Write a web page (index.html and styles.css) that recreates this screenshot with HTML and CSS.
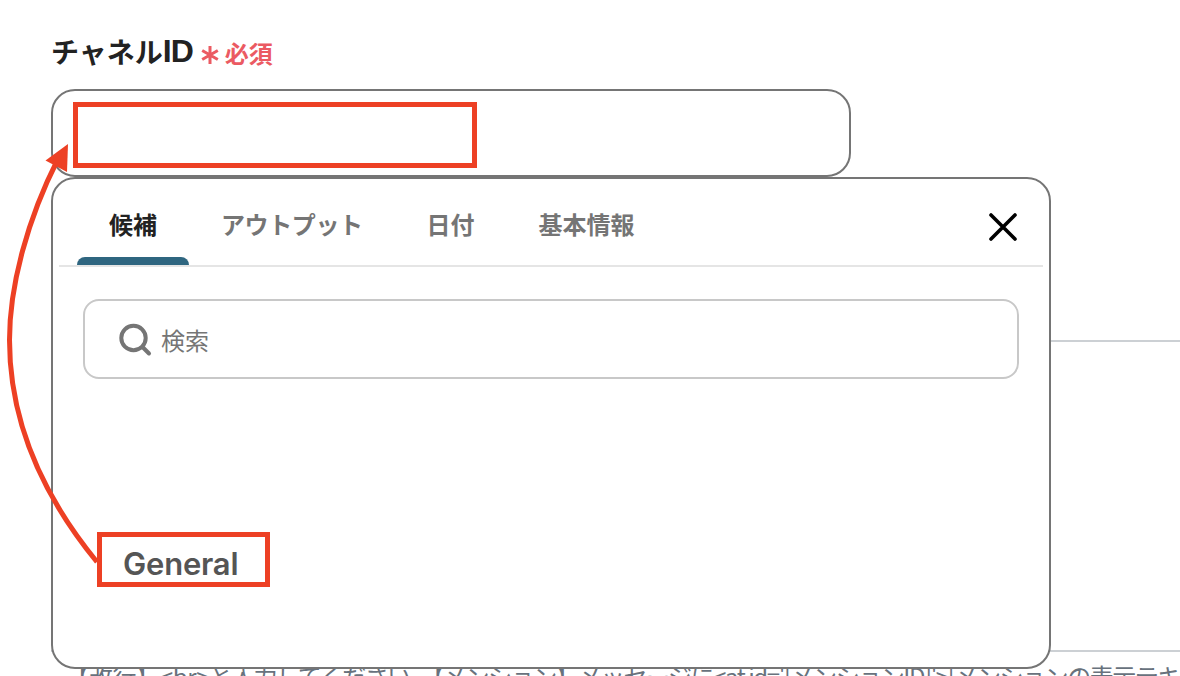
FILE: index.html
```html
<!DOCTYPE html>
<html lang="ja">
<head>
    <meta charset="UTF-8">
    <meta name="viewport" content="width=device-width, initial-scale=1.0">
    <title>チャネルID</title>
    <link rel="stylesheet" href="styles.css">
</head>
<body>
    <div class="page">
        <div class="form-group">
            <label class="label" for="channel"><span class="label-kana">チャネル</span><span class="label-id">ID</span>
                <span class="required">
                    <svg class="asterisk" width="18" height="20" viewBox="0 0 18 20">
                        <path d="M9 1v18M1.2 5.5l15.6 9M16.8 5.5l-15.6 9"/>
                    </svg>必須</span>
            </label>
            <div class="field">
                <input type="text" id="channel" name="channel">
                <div class="mark mark-input"></div>
            </div>
        </div>

        <div class="message">
            <div class="message-box"></div>
            <p class="hint">【改行】&lt;br&gt;<span class="hint-text">と入力してください、【メンション】メッセージに&lt;at id='[メンションID]'&gt;[メンションの表示テキ</span></p>
        </div>

        <div class="popup">
            <div class="tabs">
                <div class="tab active">候補</div>
                <div class="tab tab-output">アウトプット</div>
                <div class="tab">日付</div>
                <div class="tab">基本情報</div>
                <svg class="close" width="28" height="28" viewBox="0 0 28 28">
                    <path d="M2 2l24 24M26 2L2 26"/>
                </svg>
            </div>
            <div class="search">
                <svg class="search-icon" width="34" height="34" viewBox="0 0 34 34">
                    <circle cx="15.5" cy="15" r="12.2"/>
                    <path d="M24.5 24l6.500 6.500"/>
                </svg>
                <span>検索</span>
            </div>
            <div class="option mark">General</div>
        </div>

        <svg class="arrow" width="110" height="440" viewBox="0 0 110 440">
            <path class="arrow-line" d="M97 432C38 360 9.500 285 9.500 210C9.500 155 28 88 58 29"/>
            <path class="arrow-head" d="M68 14L45.500 30.500L67 42z"/>
        </svg>
    </div>
</body>
</html>
```

FILE: styles.css
```css
body {
    margin: 0;
    background-color: #fff;
    font-family: "Noto Sans CJK JP", sans-serif;
    color: #222;
}
.page {
    position: relative;
    width: 1180px;
    height: 676px;
    overflow: hidden;
}
.form-group {
    padding: 31px 0 0 51px;
}
.label {
    display: flex;
    align-items: center;
    height: 40px;
    margin-bottom: 18px;
    font-weight: bold;
    white-space: nowrap;
}
.label-kana {
    font-size: 28px;
    line-height: 40px;
}
.label-id {
    font-family: "Liberation Sans", sans-serif;
    font-size: 32px;
    line-height: 40px;
    letter-spacing: -1px;
}
.required {
    display: flex;
    align-items: center;
    gap: 6px;
    margin-left: 8px;
    font-size: 24px;
    line-height: 40px;
    padding-top: 3px;
    color: #eb5a62;
}
.asterisk {
    fill: none;
    stroke: #eb5a62;
    stroke-width: 3;
    margin-top: 4px;
}
.field {
    display: flex;
    position: relative;
    width: 800px;
}
.field input {
    width: 100%;
    height: 88px;
    padding: 0 24px;
    box-sizing: border-box;
    border: 2px solid #757575;
    border-radius: 24px;
}
.mark {
    box-sizing: border-box;
    border: 5px solid #ed4024;
}
.mark-input {
    position: absolute;
    left: 22px;
    top: 13px;
    width: 404px;
    height: 66px;
}
.message {
    padding: 163px 0 0 51px;
}
.message-box {
    height: 308px;
    border-top: 2px solid #ccd0d4;
    border-bottom: 2px solid #ccd0d4;
}
.hint {
    margin: 6px 0 0 14px;
    font-size: 24px;
    line-height: 36px;
    letter-spacing: -0.3px;
    color: #68727d;
    white-space: nowrap;
}
.hint-text {
    margin-left: -1px;
    letter-spacing: -1.45px;
}
/* dropdown lies over the message field */
.popup {
    position: absolute;
    left: 51px;
    top: 177px;
    width: 1000px;
    height: 492px;
    box-sizing: border-box;
    background-color: #fff;
    border: 2px solid #757575;
    border-radius: 24px;
}
.tabs {
    display: flex;
    height: 86px;
    margin: 0 6px;
    padding: 0 26px 0 18px;
    border-bottom: 2px solid #e5e5e5;
}
.tab {
    height: 86px;
    box-sizing: border-box;
    padding: 27px 32px 0;
    font-size: 24px;
    line-height: 36px;
    font-weight: bold;
    color: #757575;
    white-space: nowrap;
}
.tab.active {
    display: flex;
    flex-direction: column;
    justify-content: space-between;
    width: 112px;
    color: #222;
}
.tab.active::after {
    content: "";
    height: 8px;
    margin: 0 -32px;
    background-color: #2f6680;
    border-radius: 8px 8px 0 0;
}
.tab-output {
    letter-spacing: -0.4px;
}
.close {
    margin: 34px 0 0 auto;
    fill: none;
    stroke: #000;
    stroke-width: 3.6;
    stroke-linecap: round;
}
.search {
    display: flex;
    align-items: center;
    height: 80px;
    box-sizing: border-box;
    margin: 32px 30px 0;
    padding-left: 33px;
    border: 2px solid #c8c8c8;
    border-radius: 16px;
    font-size: 24px;
    color: #757575;
}
.search-icon {
    margin: 2px 9px 0 0;
    fill: none;
    stroke: #757575;
    stroke-width: 4;
    stroke-linecap: round;
}
.option {
    width: 173px;
    height: 55px;
    margin: 153px 0 0 44px;
    padding-left: 21px;
    font-family: Inter, sans-serif;
    font-size: 31px;
    line-height: 54px;
    font-weight: 600;
    letter-spacing: -0.2px;
    color: #555;
}
.arrow {
    position: absolute;
    left: 0;
    top: 130px;
}
.arrow-line {
    fill: none;
    stroke: #ed4024;
    stroke-width: 5;
}
.arrow-head {
    fill: #ed4024;
}
```
